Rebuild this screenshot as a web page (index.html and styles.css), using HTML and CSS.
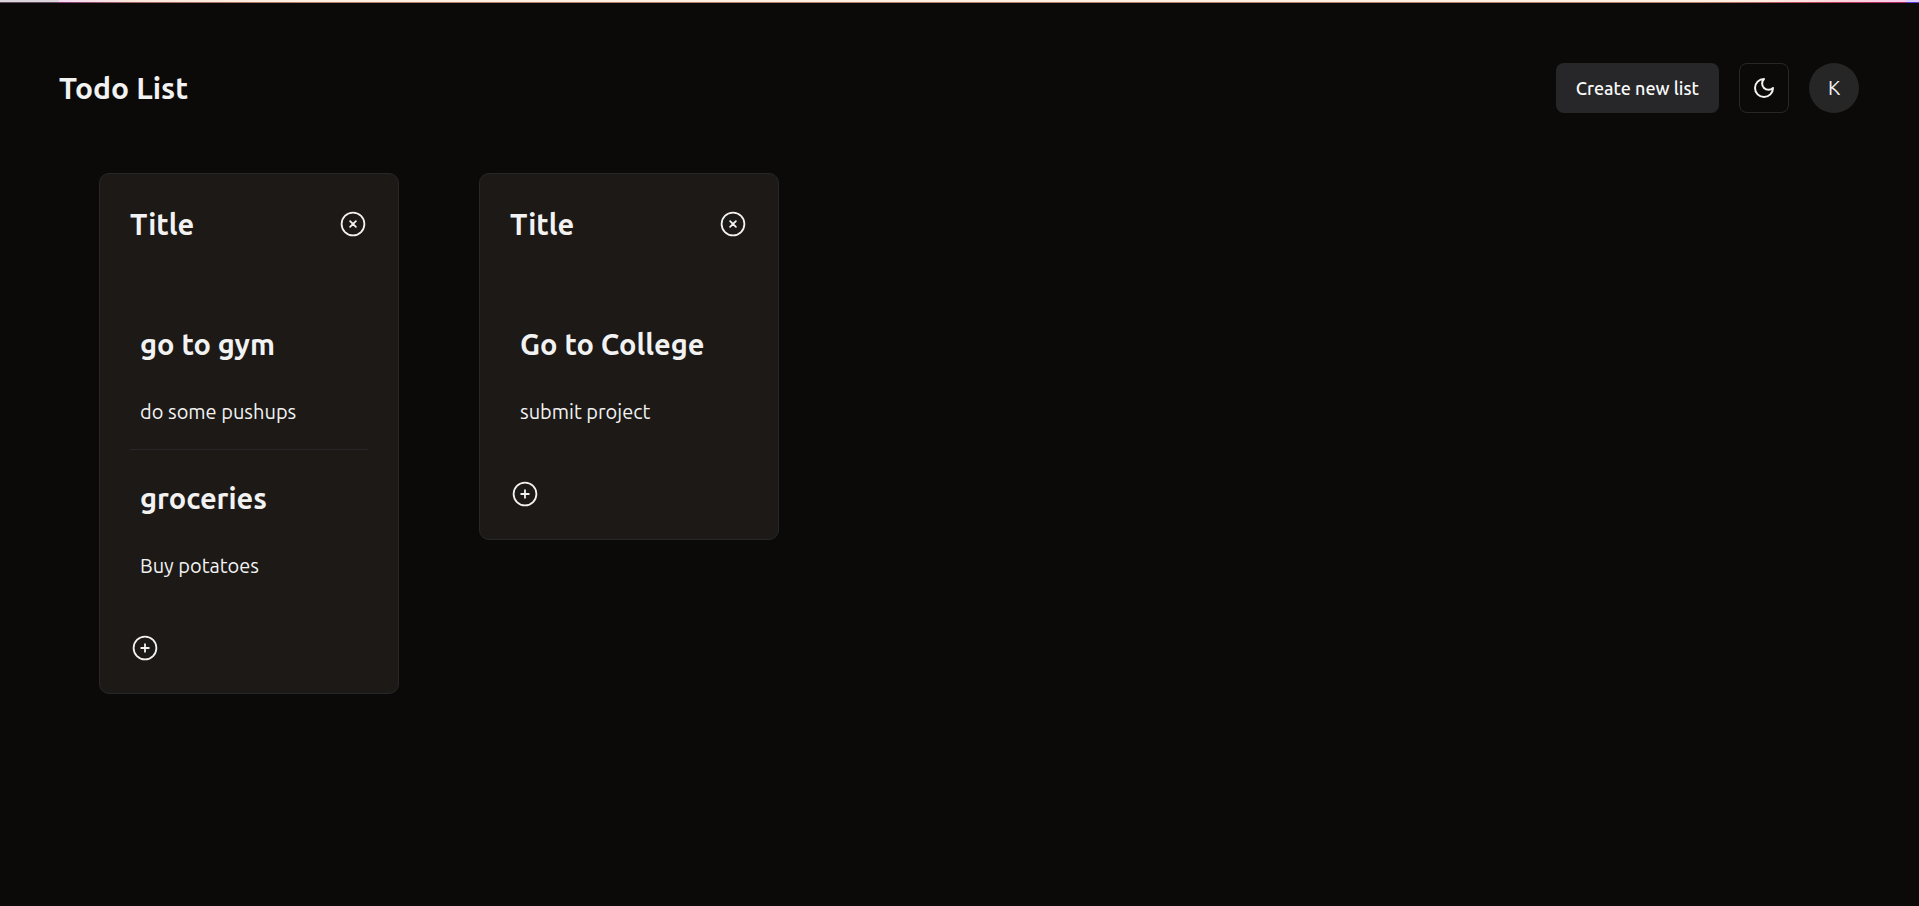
FILE: index.html
```html
<!DOCTYPE html>
<html lang="en">
<head>
<meta charset="utf-8">
<title>Todo List</title>
<link rel="stylesheet" href="styles.css">
</head>
<body>
<svg class="sprite" aria-hidden="true">
  <symbol id="icon-close" viewBox="0 0 30 30"><circle cx="15" cy="15" r="11.4"/><path d="M12.1 12.1l5.8 5.8M17.9 12.1l-5.8 5.8"/></symbol>
  <symbol id="icon-add" viewBox="0 0 30 30"><circle cx="15" cy="15" r="11.4"/><path d="M15 11.2v7.6M11.2 15h7.6"/></symbol>
</svg>
<div class="accent-bar"></div>
<header class="header">
  <h1 class="page-title">Todo List</h1>
  <div class="actions">
    <button class="create-button" type="button">Create new list</button>
    <button class="theme-button" type="button" aria-label="Toggle theme">
      <svg class="moon" viewBox="0 0 24 24"><path d="M12 3a6 6 0 0 0 9 9 9 9 0 1 1-9-9Z"/></svg>
    </button>
    <button class="avatar" type="button">K</button>
  </div>
</header>
<main class="lists">
  <section class="card">
    <div class="card-header">
      <h2 class="heading">Title</h2>
      <button class="icon-button" type="button" aria-label="Delete list"><svg class="icon"><use href="#icon-close"/></svg></button>
    </div>
    <ul class="todos">
      <li class="todo">
        <h3 class="heading">go to gym</h3>
        <p class="description">do some pushups</p>
      </li>
      <li class="todo">
        <h3 class="heading">groceries</h3>
        <p class="description">Buy potatoes</p>
      </li>
    </ul>
    <button class="icon-button" type="button" aria-label="Add todo"><svg class="icon"><use href="#icon-add"/></svg></button>
  </section>
  <section class="card">
    <div class="card-header">
      <h2 class="heading">Title</h2>
      <button class="icon-button" type="button" aria-label="Delete list"><svg class="icon"><use href="#icon-close"/></svg></button>
    </div>
    <ul class="todos">
      <li class="todo">
        <h3 class="heading">Go to College</h3>
        <p class="description">submit project</p>
      </li>
    </ul>
    <button class="icon-button" type="button" aria-label="Add todo"><svg class="icon"><use href="#icon-add"/></svg></button>
  </section>
</main>
</body>
</html>
```
FILE: styles.css
```css
* {
  box-sizing: border-box;
  margin: 0;
  padding: 0;
}

body {
  background: #0c0a09;
  color: #f2f2f2;
  font-family: Ubuntu, "Noto Sans", sans-serif;
  font-size: 20px;
  line-height: 30px;
}

button {
  border: 0;
  background: none;
  color: inherit;
  font: inherit;
  cursor: pointer;
}

.sprite {
  display: none;
}

.accent-bar {
  height: 3px;
  border-bottom: 1px solid;
  border-image: linear-gradient(90deg, #63505f 0 59px, #863b78 59px, #a06a63 140px, #b67f68 300px, #b67f68 1700px, #b83b55 1830px, #b0225f 1905px, #5b3bd0 1906px) 1;
  background: linear-gradient(90deg, #ddd5dc 0 59px, #f5dcf0 59px, #fce8dc 140px, #fff0e2 300px, #fff0e2 1760px, #fad3e0 1860px, #f7cdec 1905px, #dccffb 1906px);
}

.header {
  display: flex;
  align-items: center;
  justify-content: space-between;
  padding: 60px 60px 60px 59px;
}

.page-title {
  font-size: 30px;
  font-weight: 700;
  line-height: 40px;
}

.heading {
  font-size: 29px;
  font-weight: 700;
  line-height: 40px;
}

.actions {
  display: flex;
  gap: 20px;
}

.create-button {
  height: 50px;
  padding: 0 20px;
  border-radius: 8px;
  background: #27272a;
  color: #fafafa;
  font-size: 18px;
  font-weight: 500;
}

.theme-button {
  display: grid;
  place-items: center;
  width: 50px;
  height: 50px;
  border: 1px solid #27272a;
  border-radius: 8px;
}

.moon {
  width: 24px;
  height: 24px;
  fill: none;
  stroke: currentColor;
  stroke-width: 2;
  stroke-linecap: round;
  stroke-linejoin: round;
}

.avatar {
  width: 50px;
  height: 50px;
  border-radius: 50%;
  background: #262626;
}

.lists {
  display: flex;
  flex-wrap: wrap;
  align-items: flex-start;
  gap: 80px;
  padding: 0 99px;
}

.card {
  width: 300px;
  padding: 30px;
  border: 1px solid #27272a;
  border-radius: 10px;
  background: #1c1917;
}

.card-header {
  display: flex;
  align-items: center;
  justify-content: space-between;
}

.todos {
  margin: 52px 0 30px;
  list-style: none;
}

.todo {
  display: grid;
  gap: 33px;
  padding: 28px 10px 22px;
}

.todo + .todo {
  border-top: 1px solid #27272a;
}

.icon-button,
.icon {
  display: block;
  width: 30px;
  height: 30px;
}

.icon {
  fill: none;
  stroke: currentColor;
  stroke-width: 1.8;
  stroke-linecap: round;
}
```
